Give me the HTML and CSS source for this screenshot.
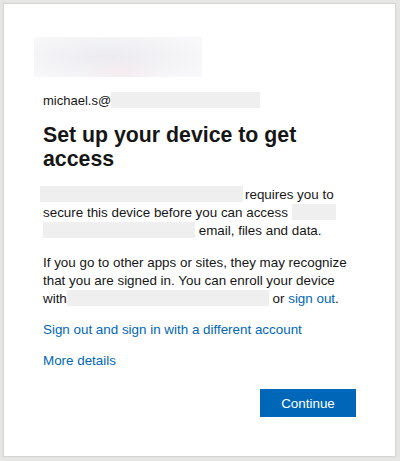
FILE: index.html
```html
<!DOCTYPE html>
<html lang="en">
<head>
  <meta charset="UTF-8" />
  <title>Set up your device</title>
  <link rel="stylesheet" href="styles.css">
</head>
<body>
  <div class="card">
    <div class="logo"></div>

    <div class="account">michael.s@<span class="redact redact-email"></span></div>

    <h1>Set up your device to get access</h1>

    <p class="text">
      <span class="redact redact-org"></span>requires you to secure this device before you can access <span class="redact redact-short"></span> <span class="redact redact-company"></span> email, files and data.
    </p>

    <p class="text">
      If you go to other apps or sites, they may recognize that you are signed in. You can enroll your device with<span class="redact redact-app"></span> or <a href="#">sign out</a>.
    </p>

    <a class="link" href="#">Sign out and sign in with a different account</a>
    <a class="link" href="#">More details</a>

    <div class="actions">
      <button class="btn-primary">Continue</button>
    </div>
  </div>
</body>
</html>
```

FILE: styles.css
```css
* {
  margin: 0;
  padding: 0;
  box-sizing: border-box;
}

body {
  background: #e6e6e4;
  font-family: "Liberation Sans", Arial, sans-serif;
  color: #161616;
  padding: 4px 5px 5px 4px;
}

.card {
  background: #fff;
  height: 452px;
  padding: 33px 39px 0 39px;
  box-shadow: 0 0 1px 1px #d6d6d4;
}

/* blurred tenant logo */
.logo {
  width: 168px;
  height: 40px;
  margin-left: -9px;
  background:
    radial-gradient(ellipse 25% 45% at 52% 85%, rgba(247, 232, 235, 0.6), transparent),
    radial-gradient(ellipse 65% 75% at 45% 50%, #ebecf0, #f8f8fa 95%);
}

.account {
  margin-top: 15px;
  font-size: 13px;
  line-height: 18px;
}

/* hidden tenant names */
.redact {
  display: inline-block;
  background: #efefef;
  vertical-align: -3px;
  height: 16px;
}

.redact-email {
  width: 149px;
}

h1 {
  margin-top: 13px;
  font-size: 21.3px;
  line-height: 24px;
  font-weight: bold;
}

.text {
  margin-top: 15px;
  font-size: 13.4px;
  line-height: 18px;
}

.text + .text {
  margin-top: 14px;
}

.redact-org {
  width: 203px;
  margin-left: -3px;
  margin-right: 2px;
}

.redact-short {
  width: 44px;
}

.redact-company {
  width: 152px;
}

.redact-app {
  width: 202px;
}

a {
  color: #0067b8;
  text-decoration: none;
}

.link {
  display: block;
  font-size: 13.4px;
  line-height: 18px;
  margin-top: 13px;
}

.actions {
  display: flex;
  justify-content: flex-end;
  margin-top: 19px;
}

.btn-primary {
  width: 96px;
  height: 28px;
  background: #0067b8;
  color: #fff;
  border: none;
  font-family: inherit;
  font-size: 13.4px;
}
```
